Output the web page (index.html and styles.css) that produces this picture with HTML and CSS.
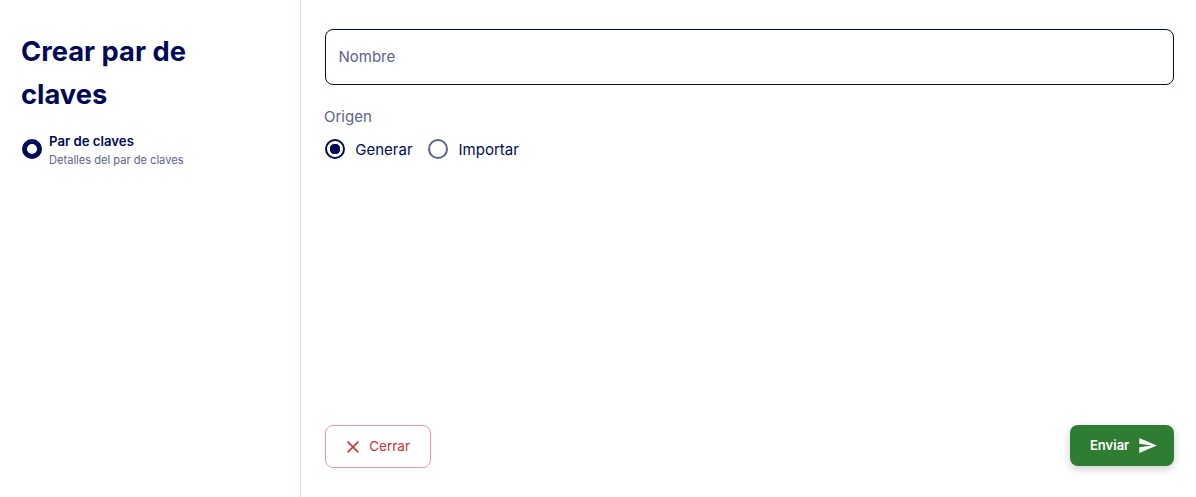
FILE: index.html
```html
<!DOCTYPE html>
<html lang="es">
<head>
<meta charset="utf-8">
<title>Crear par de claves</title>
<link rel="stylesheet" href="styles.css">
</head>
<body>
<div class="page">
  <aside class="side">
    <h1 class="title">Crear par de claves</h1>
    <div class="step">
      <span class="step-dot"></span>
      <div class="step-text">
        <div class="step-name">Par de claves</div>
        <div class="step-desc">Detalles del par de claves</div>
      </div>
    </div>
  </aside>
  <main class="main">
    <div class="form">
      <div class="field">Nombre</div>
      <div class="label">Origen</div>
      <div class="radios">
        <div class="radio"><span class="mark on"></span><span class="radio-text">Generar</span></div>
        <div class="radio"><span class="mark"></span><span class="radio-text">Importar</span></div>
      </div>
    </div>
    <div class="actions">
      <button class="btn close" type="button">
        <svg class="icon-x" viewBox="0 0 12 12" width="12" height="12"><path d="M.6.6L11.4 11.4M11.4.6L.6 11.4" fill="none" stroke="currentColor" stroke-width="1.5"/></svg>
        <span class="btn-text">Cerrar</span>
      </button>
      <button class="btn send" type="button">
        <span class="btn-text">Enviar</span>
        <svg class="icon-send" viewBox="2 3 21 18" width="18" height="15"><path d="M2.01 21L23 12 2.01 3 2 10l15 2-15 2z" fill="currentColor"/></svg>
      </button>
    </div>
  </main>
</div>
</body>
</html>
```
FILE: styles.css
```css
* { box-sizing: border-box; }
html, body { margin: 0; height: 100%; }
body { font-family: Inter, "Liberation Sans", sans-serif; color: #000a58; background: #fff; }
.page { display: flex; height: 497px; overflow: hidden; }
.side { width: 301px; flex: none; border-right: 1px solid #dfe0ec; padding: 30px 40px 0 21px; }
.title { margin: 0; font-size: 27.3px; line-height: 43px; font-weight: 700; color: #000a58; }
.step { display: flex; align-items: flex-start; gap: 7px; margin-top: 14px; }
.step-dot { width: 20px; height: 20px; border-radius: 50%; border: 5.5px solid #000a58; flex: none; margin-left: 1px; margin-top: 9px; }
.step-text { padding-top: 2px; }
.step-name { font-size: 13.2px; line-height: 19px; font-weight: 600; }
.step-desc { font-size: 11.1px; line-height: 18px; color: #5c6291; }
.main { flex: 1; display: flex; flex-direction: column; justify-content: space-between; padding: 29px 22px 29px 24px; }
.field { height: 56px; border: 1px solid #000a58; border-radius: 8px; padding: 0 12.5px 1px; display: flex; align-items: center; font-size: 15px; color: #5c6291; }
.label { margin-top: 22px; margin-left: -1px; font-size: 15px; line-height: 20px; color: #5c6291; }
.radios { display: flex; gap: 15.7px; margin-top: 12px; }
.radio { display: flex; align-items: flex-start; gap: 10.3px; font-size: 15px; line-height: 20px; }
.radio-text { padding-top: 1px; }
.mark { width: 20px; height: 20px; border-radius: 50%; border: 2px solid #5c6291; flex: none; }
.mark.on { border-color: #000a58; background: radial-gradient(circle, #000a58 0 5px, transparent 5.5px); }
.actions { display: flex; justify-content: space-between; align-items: flex-start; }
.btn { font-family: inherit; border-radius: 8px; display: flex; align-items: center; cursor: pointer; }
.btn-text { margin-bottom: 2px; }
.close { width: 106px; height: 43px; background: #fff; border: 1px solid #ef9a9a; color: #d32f2f; padding: 0 0 0 20.5px; gap: 10.7px; font-size: 13.5px; font-weight: 400; }
.send { width: 104px; height: 41px; background: #2e7d32; border: none; color: #fff; font-size: 13px; font-weight: 600; padding: 0 0 0 20px; gap: 10px; box-shadow: 0 3px 8px rgba(0, 0, 0, .2); }
```
